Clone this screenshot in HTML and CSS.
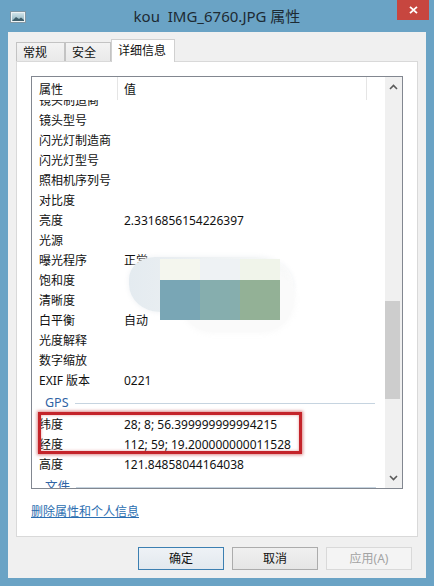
FILE: index.html
```html
<!DOCTYPE html>
<html lang="zh-CN">
<head>
<meta charset="utf-8">
<title>kou IMG_6760.JPG 属性</title>
<link rel="stylesheet" href="styles.css">
</head>
<body>
<div class="window">
  <div class="titlebar">
    <div class="tleft">
      <svg class="appicon" width="16" height="12" viewBox="0 0 16 12">
        <defs>
          <linearGradient id="pic" x1="0" y1="0" x2="0" y2="1">
            <stop offset="0" stop-color="#cfe3ea"/>
            <stop offset="1" stop-color="#8fb3bf"/>
          </linearGradient>
        </defs>
        <rect x="0.5" y="0.5" width="15" height="11" fill="#eef3f5" stroke="#7f96a3"/>
        <rect x="2" y="2" width="12" height="8" fill="url(#pic)"/>
        <path d="M2 10 L6 6 L9 8 L11 6.5 L14 9 L14 10 Z" fill="#3f5f6c"/>
      </svg>
    </div>
    <div class="title">kou&nbsp; IMG_6760.JPG 属性</div>
    <div class="tright">
      <div class="close">
        <svg width="9" height="8" viewBox="0 0 9 8"><path d="M1 0.8 L8 7.2 M8 0.8 L1 7.2" stroke="#fff" stroke-width="1.8"/></svg>
      </div>
    </div>
  </div>

  <div class="client">
    <div class="tabs">
      <div class="tab t1">常规</div>
      <div class="tab t2">安全</div>
      <div class="tab t3 active">详细信息</div>
    </div>

    <div class="panel">
      <div class="listbox">
        <div class="list">
          <div class="header">
            <div class="hcol hname">属性</div>
            <div class="hcol hvalue">值</div>
            <div class="hcol hrest"></div>
          </div>
          <div class="body">
            <div class="rows">
              <div class="row"><span class="n">镜头制造商</span><span class="v"></span></div>
              <div class="row"><span class="n">镜头型号</span><span class="v"></span></div>
              <div class="row"><span class="n">闪光灯制造商</span><span class="v"></span></div>
              <div class="row"><span class="n">闪光灯型号</span><span class="v"></span></div>
              <div class="row"><span class="n">照相机序列号</span><span class="v"></span></div>
              <div class="row"><span class="n">对比度</span><span class="v"></span></div>
              <div class="row"><span class="n">亮度</span><span class="v">2.3316856154226397</span></div>
              <div class="row"><span class="n">光源</span><span class="v"></span></div>
              <div class="row"><span class="n">曝光程序</span><span class="v">正常</span></div>
              <div class="row"><span class="n">饱和度</span><span class="v"></span></div>
              <div class="row"><span class="n">清晰度</span><span class="v"></span></div>
              <div class="row"><span class="n">白平衡</span><span class="v">自动</span></div>
              <div class="row"><span class="n">光度解释</span><span class="v"></span></div>
              <div class="row"><span class="n">数字缩放</span><span class="v"></span></div>
              <div class="row"><span class="n">EXIF 版本</span><span class="v">0221</span></div>
              <div class="group"><span class="gname">GPS</span><span class="rule"></span></div>
              <div class="row"><span class="n">纬度</span><span class="v">28; 8; 56.399999999994215</span></div>
              <div class="row"><span class="n">经度</span><span class="v">112; 59; 19.200000000011528</span></div>
              <div class="row"><span class="n">高度</span><span class="v">121.84858044164038</span></div>
              <div class="group"><span class="gname">文件</span><span class="rule"></span></div>
            </div>
            <div class="blob"></div>
            <div class="halo"></div>
            <div class="mosaic">
              <i class="m1"></i><i class="m2"></i><i class="m3"></i>
              <i class="m4"></i><i class="m5"></i><i class="m6"></i>
            </div>
            <div class="mark"></div>
          </div>
        </div>
        <div class="scrollbar">
          <div class="arrow">
            <svg width="9" height="6" viewBox="0 0 9 6"><path d="M1 5 L4.5 1.5 L8 5" fill="none" stroke="#5a5a5a" stroke-width="1.6"/></svg>
          </div>
          <div class="track"><div class="thumb"></div></div>
          <div class="arrow">
            <svg width="9" height="6" viewBox="0 0 9 6"><path d="M1 1 L4.5 4.5 L8 1" fill="none" stroke="#5a5a5a" stroke-width="1.6"/></svg>
          </div>
        </div>
      </div>
      <a class="link" href="#">删除属性和个人信息</a>
    </div>

    <div class="buttons">
      <div class="btn default">确定</div>
      <div class="btn">取消</div>
      <div class="btn disabled">应用(A)</div>
    </div>
  </div>
</div>
</body>
</html>
```
FILE: styles.css
```css
* { box-sizing: border-box; }

html, body {
  margin: 0;
  padding: 0;
}

body {
  width: 434px;
  height: 586px;
  overflow: hidden;
  background: #6aa3c5;
  font-family: "Noto Sans", "Noto Sans CJK SC", sans-serif;
  font-size: 12px;
  color: #111;
}

.window {
  width: 434px;
  height: 586px;
  display: flex;
  flex-direction: column;
  background: #6aa3c5;
}

/* title bar */
.titlebar {
  height: 32px;
  flex: none;
  display: grid;
  grid-template-columns: 1fr auto 1fr;
}

.tleft {
  padding: 11px 0 0 10px;
}

.appicon { display: block; }

.title {
  font-family: "Noto Sans", "Noto Sans CJK SC", sans-serif;
  font-size: 15px;
  line-height: 32px;
  color: #1d2a33;
  white-space: nowrap;
}

.tright {
  display: flex;
  justify-content: flex-end;
  padding-right: 5px;
}

.close {
  width: 32px;
  height: 20px;
  background: #c7463f;
  display: flex;
  align-items: center;
  justify-content: center;
}

/* client area */
.client {
  flex: 1;
  margin: 0 8px 8px;
  background: #f0f0f0;
  padding: 7px 8px 0;
  display: flex;
  flex-direction: column;
}

.tabs {
  height: 22px;
  display: flex;
  align-items: flex-end;
}

.tab {
  height: 19px;
  border: 1px solid #c3c3c3;
  border-bottom: none;
  background: linear-gradient(#f3f3f3, #e9e9e9);
  padding-left: 6px;
  line-height: 18px;
  font-family: "Noto Sans CJK SC", sans-serif;
  color: #111;
}

.t1 { width: 49px; }
.t2 { width: 46px; }
.t3 { width: 64px; }

.tab.active {
  height: 23px;
  background: #fff;
  margin-bottom: -1px;
  position: relative;
  z-index: 1;
  border-color: #d0d0d0;
  line-height: 20px;
}

.panel {
  height: 476px;
  border: 1px solid #d9d9d9;
  background: #fff;
  padding: 14px 14px 0;
  display: flex;
  flex-direction: column;
}

.listbox {
  height: 413px;
  border: 1px solid #828790;
  display: flex;
  flex: none;
}

.list {
  flex: 1;
  display: flex;
  flex-direction: column;
  min-width: 0;
}

.header {
  height: 23px;
  display: flex;
  flex: none;
  font-family: "Noto Sans CJK SC", sans-serif;
  line-height: 23px;
  background: #fff;
}

.hcol { height: 23px; }

.hname {
  width: 86px;
  padding-left: 7px;
  border-right: 1px solid #e5e5e5;
}

.hvalue {
  width: 249px;
  padding-left: 6px;
  border-right: 1px solid #e5e5e5;
}

.hrest { flex: 1; }

.body {
  flex: 1;
  overflow: hidden;
  position: relative;
}

.rows {
  margin-top: -9px;
}

.row {
  height: 20px;
  line-height: 20px;
  display: flex;
  white-space: nowrap;
}

.row .n {
  width: 92px;
  padding-left: 7px;
}

.row .v {
  flex: 1;
}

.group {
  height: 24px;
  display: flex;
  align-items: center;
  padding-left: 13px;
}

.gname {
  color: #2f63a4;
  line-height: 20px;
  font-size: 12.5px;
}

.rule {
  height: 1px;
  width: 300px;
  margin-left: 6px;
  background: #c6d4e0;
}

/* pixelated blur over a value (overlay) */
.halo {
  position: absolute;
  left: 150px;
  top: 170px;
  width: 112px;
  height: 62px;
  border-radius: 20px 40px 44px 40px;
  background: #fafafa;
  box-shadow: 0 0 5px 2px rgba(250, 250, 250, 0.9);
}

.blob {
  position: absolute;
  left: 97px;
  top: 157px;
  width: 164px;
  height: 55px;
  border-radius: 28px 40px 30px 34px / 24px 30px 30px 30px;
  background: linear-gradient(90deg, #e4ebf0 0, #e9eef1 25%, #f5f7f7 85%, #fbfbfb 100%);
  box-shadow: 0 0 4px 1px rgba(240, 243, 245, 0.8);
}

.mosaic {
  position: absolute;
  left: 128px;
  top: 159px;
  display: grid;
  grid-template-columns: 40px 40px 40px;
  grid-template-rows: 21px 40px;
}

.mosaic i { display: block; }
.m1 { background: #f4f6ee; }
.m2 { background: #eef2f4; }
.m3 { background: #f0f4ea; }
.m4 { background: #79a6b5; }
.m5 { background: #86aeae; }
.m6 { background: #93b196; }

/* red annotation box */
.mark {
  position: absolute;
  left: 6px;
  top: 312px;
  width: 264px;
  height: 42px;
  border: 3px solid #c4242a;
  box-shadow: 0 0 3px 1px rgba(190, 40, 40, 0.55), inset 0 0 3px rgba(190, 40, 40, 0.45);
}

/* scrollbar */
.scrollbar {
  width: 17px;
  flex: none;
  background: #f0f0f0;
  display: flex;
  flex-direction: column;
}

.arrow {
  height: 20px;
  display: flex;
  align-items: center;
  justify-content: center;
  padding-right: 1px;
}

.track {
  flex: 1;
}

.thumb {
  margin-top: 204px;
  width: 15px;
  height: 98px;
  background: #cdcdcd;
}

.link {
  margin-top: 12px;
  align-self: flex-start;
  line-height: 20px;
  color: #2a6db0;
  text-decoration: underline;
  font-family: "Noto Sans CJK SC", sans-serif;
}

/* dialog buttons */
.buttons {
  margin-top: 10px;
  display: flex;
  justify-content: flex-end;
  gap: 8px;
  padding-right: 6px;
}

.btn {
  width: 86px;
  height: 23px;
  border: 1px solid #acacac;
  background: linear-gradient(#f0f0f0, #e5e5e5);
  text-align: center;
  line-height: 21px;
  color: #111;
}

.btn.default {
  border-color: #3c7fb1;
  background: linear-gradient(#eef2f6, #e2e8ee);
}

.btn.disabled {
  border-color: #d9d9d9;
  background: #f4f4f4;
  color: #a3a3a3;
}
```
